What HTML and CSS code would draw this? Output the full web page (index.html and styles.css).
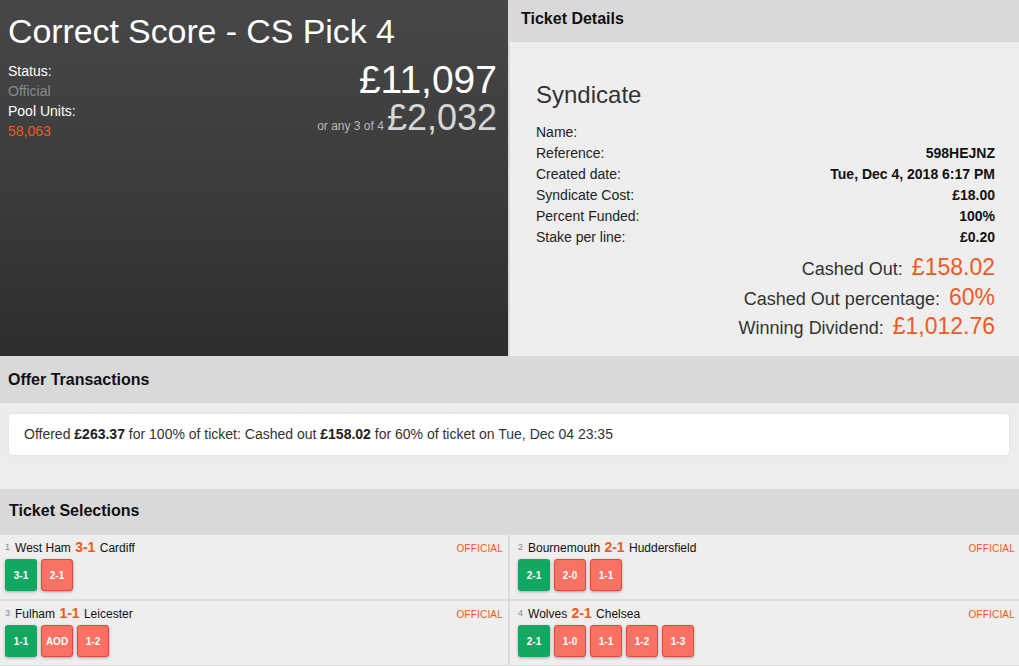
FILE: index.html
```html
<!DOCTYPE html>
<html>
<head>
<meta charset="utf-8">
<link rel="stylesheet" href="styles.css">
</head>
<body>
<div class="top">
  <div class="pool">
    <h1 class="pool-title">Correct Score - CS Pick 4</h1>
    <div class="pool-info">
      <div class="pool-meta">
        <div class="meta-label">Status:</div>
        <div class="meta-muted">Official</div>
        <div class="meta-label">Pool Units:</div>
        <div class="meta-orange">58,063</div>
      </div>
      <div class="pool-amounts">
        <div class="amount-main">£11,097</div>
        <div class="amount-sub"><span class="amount-note">or any 3 of 4</span><span class="amount-alt">£2,032</span></div>
      </div>
    </div>
  </div>
  <div class="details">
    <div class="panel-head">Ticket Details</div>
    <div class="details-body">
      <h2 class="synd-title">Syndicate</h2>
      <div class="row"><span>Name:</span><b></b></div>
      <div class="row"><span>Reference:</span><b>598HEJNZ</b></div>
      <div class="row"><span>Created date:</span><b>Tue, Dec 4, 2018 6:17 PM</b></div>
      <div class="row"><span>Syndicate Cost:</span><b>£18.00</b></div>
      <div class="row"><span>Percent Funded:</span><b>100%</b></div>
      <div class="row"><span>Stake per line:</span><b>£0.20</b></div>
      <div class="totals">
        <div class="total"><span class="total-label">Cashed Out:</span><span class="total-value">£158.02</span></div>
        <div class="total"><span class="total-label">Cashed Out percentage:</span><span class="total-value">60%</span></div>
        <div class="total"><span class="total-label">Winning Dividend:</span><span class="total-value">£1,012.76</span></div>
      </div>
    </div>
  </div>
</div>

<div class="section-head offer-head">Offer Transactions</div>
<div class="offer-body">
  <div class="offer-card">Offered <b>£263.37</b> for 100% of ticket: Cashed out <b>£158.02</b> for 60% of ticket on Tue, Dec 04 23:35</div>
</div>

<div class="section-head sel-head">Ticket Selections</div>
<div class="selections">
  <div class="sel">
    <div class="sel-top"><span class="sel-match"><span class="sel-num">1</span>West Ham <b class="score">3-1</b> Cardiff</span><span class="sel-status">OFFICIAL</span></div>
    <div class="picks"><span class="pick win">3-1</span><span class="pick lose">2-1</span></div>
  </div>
  <div class="sel sel-right">
    <div class="sel-top"><span class="sel-match"><span class="sel-num">2</span>Bournemouth <b class="score">2-1</b> Huddersfield</span><span class="sel-status">OFFICIAL</span></div>
    <div class="picks"><span class="pick win">2-1</span><span class="pick lose">2-0</span><span class="pick lose">1-1</span></div>
  </div>
  <div class="sel">
    <div class="sel-top"><span class="sel-match"><span class="sel-num">3</span>Fulham <b class="score">1-1</b> Leicester</span><span class="sel-status">OFFICIAL</span></div>
    <div class="picks"><span class="pick win">1-1</span><span class="pick lose">AOD</span><span class="pick lose">1-2</span></div>
  </div>
  <div class="sel sel-right">
    <div class="sel-top"><span class="sel-match"><span class="sel-num">4</span>Wolves <b class="score">2-1</b> Chelsea</span><span class="sel-status">OFFICIAL</span></div>
    <div class="picks"><span class="pick win">2-1</span><span class="pick lose">1-0</span><span class="pick lose">1-1</span><span class="pick lose">1-2</span><span class="pick lose">1-3</span></div>
  </div>
</div>
</body>
</html>
```

FILE: styles.css
```css
* { box-sizing: border-box; }
html, body { margin: 0; padding: 0; }
body {
  background: #dcdbdc;
  font-family: "Liberation Sans", Arial, sans-serif;
  color: #222;
  width: 1019px;
  height: 666px;
  overflow: hidden;
}
.top {
  display: grid;
  grid-template-columns: 508px 1fr;
  column-gap: 2px;
  height: 356px;
}
.pool {
  background: linear-gradient(180deg, #474747 0%, #3c3c3c 50%, #2d2d2d 100%);
  padding: 10px 11px 0 8px;
  color: #fff;
}
.pool-title {
  margin: 0;
  font-size: 34px;
  font-weight: normal;
  line-height: 42px;
  letter-spacing: -0.1px;
}
.pool-info {
  display: flex;
  justify-content: space-between;
  margin-top: 9px;
}
.pool-meta { font-size: 14px; line-height: 20px; }
.meta-label { color: #fff; }
.meta-muted { color: #8a8a8a; }
.meta-orange { color: #f2591d; }
.pool-amounts { text-align: right; }
.amount-main { font-size: 39px; line-height: 38px; height: 38px; color: #fff; }
.amount-sub { line-height: 38px; height: 38px; }
.amount-note { font-size: 12px; color: #b8b8b8; margin-right: 3px; }
.amount-alt { font-size: 36px; color: #d6d6d6; }

.details { background: #eeeeee; display: flex; flex-direction: column; }
.panel-head {
  background: #dad9da;
  height: 42px;
  padding: 0 11px;
  font-weight: bold;
  font-size: 16px;
  line-height: 37px;
  color: #111;
}
.details-body { padding: 38px 24px 0 26px; }
.synd-title {
  margin: 0 0 12px;
  font-size: 24px;
  font-weight: normal;
  color: #333;
  line-height: 30px;
}
.row {
  display: flex;
  justify-content: space-between;
  font-size: 14px;
  line-height: 21px;
  color: #222;
}
.row b { font-weight: bold; color: #111; }
.totals { margin-top: 5px; }
.total {
  display: flex;
  justify-content: flex-end;
  align-items: baseline;
  height: 29.5px;
  line-height: 29px;
}
.total-label { font-size: 18px; color: #333; }
.total-value { font-size: 23px; color: #f2591d; margin-left: 9px; line-height: 29px; }

.section-head {
  background: #dad9da;
  font-weight: bold;
  font-size: 16px;
  color: #111;
  padding: 0 9px;
}
.offer-head { height: 46px; line-height: 45px; margin-top: 1px; padding-left: 8px; }
.offer-body { background: #ededed; padding: 11px 10px 34px 9px; }
.offer-card {
  background: #fff;
  border-radius: 3px;
  box-shadow: 0 0 2px rgba(0,0,0,0.12);
  height: 41px;
  padding: 0 15px;
  font-size: 14px;
  line-height: 41px;
  color: #333;
}
.offer-card b { color: #222; }
.sel-head { height: 44px; line-height: 44px; }

.selections {
  display: grid;
  grid-template-columns: 508px 1fr;
  gap: 2px;
  margin-top: 2px;
}
.sel {
  background: #eeeeee;
  height: 64px;
  padding: 4px 5px 0 5px;
}
.sel-right { padding-left: 8px; padding-right: 4px; }
.sel-top {
  display: flex;
  justify-content: space-between;
  align-items: baseline;
  height: 20px;
}
.sel-match { font-size: 12px; color: #111; }
.sel-num { font-size: 9px; color: #888; vertical-align: 2px; margin-right: 5px; }
.score { color: #f2591d; font-size: 14px; margin: 0 1px; }
.sel-status { font-size: 10px; color: #f2591d; letter-spacing: 0.2px; }
.picks { display: flex; gap: 4px; }
.pick {
  width: 32px;
  height: 32px;
  border-radius: 3px;
  color: #fff;
  font-size: 10px;
  font-weight: bold;
  display: flex;
  align-items: center;
  justify-content: center;
  box-shadow: 0 1px 3px rgba(0,0,0,0.3);
}
.win { background: #12a862; }
.lose { background: #fa7263; border: 1px solid #e2473a; }
```
